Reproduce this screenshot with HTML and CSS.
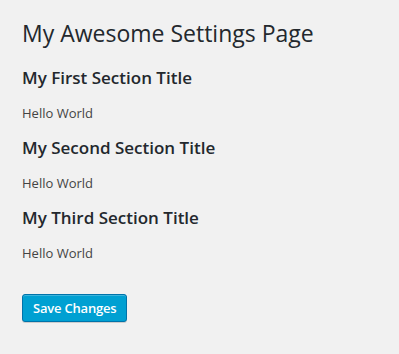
FILE: index.html
```html
<!DOCTYPE html>
<html lang="en">
<head>
  <meta charset="UTF-8" />
  <title>My Awesome Settings Page</title>
  <link rel="stylesheet" href="styles.css">
</head>
<body>
  <div class="wrap">
    <h1>My Awesome Settings Page</h1>
    <form>
      <h2>My First Section Title</h2>
      <div class="section-text">Hello World</div>
      <h2>My Second Section Title</h2>
      <div class="section-text">Hello World</div>
      <h2>My Third Section Title</h2>
      <div class="section-text">Hello World</div>
      <p class="submit">
        <button type="button" class="button-primary">Save Changes</button>
      </p>
    </form>
  </div>
</body>
</html>
```

FILE: styles.css
```css
* {
  box-sizing: border-box;
}

body {
  margin: 0;
  padding-left: 20px;
  background: #f1f1f1;
  color: #444;
  font-family: 'Open Sans', sans-serif;
  font-size: 13px;
  line-height: 1.4em;
}

.wrap {
  margin: 10px 20px 0 2px;
}

h1 {
  margin: 0;
  padding: 9px 0 4px;
  font-size: 23px;
  font-weight: 400;
  line-height: 29px;
  color: #23282d;
}

h2 {
  margin: 17px 0;
  font-size: 17px;
  font-weight: 600;
  line-height: 18px;
  color: #23282d;
}

.section-text {
  line-height: 18px;
}

.submit {
  margin: 22px 0 0;
  padding: 10px 0;
}

.button-primary {
  height: 28px;
  margin: 0;
  padding: 0 10px 1px;
  font-family: inherit;
  font-size: 13px;
  font-weight: 600;
  letter-spacing: -0.2px;
  line-height: 26px;
  color: #fff;
  background: #00a0d2;
  border: 1px solid #0073aa;
  border-radius: 3px;
  box-shadow: inset 0 1px 0 rgba(120, 200, 230, 0.5), 0 1px 0 rgba(0, 0, 0, 0.15);
  cursor: pointer;
}
```
